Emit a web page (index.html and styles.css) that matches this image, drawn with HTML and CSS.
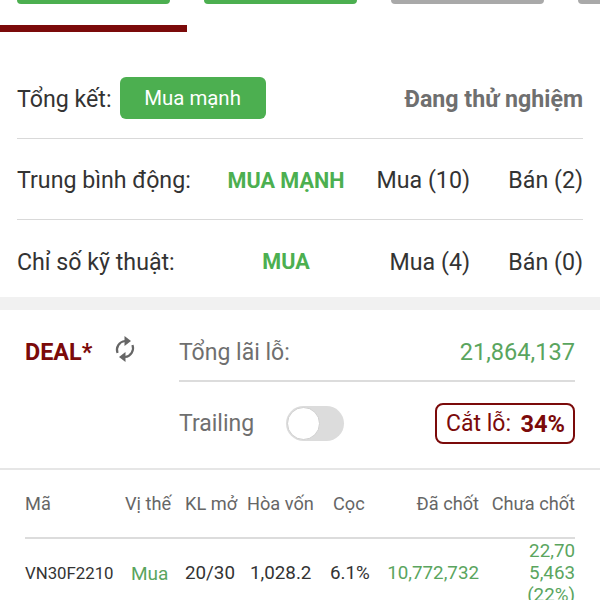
FILE: index.html
```html
<!DOCTYPE html>
<html lang="vi">
<head>
    <meta charset="UTF-8" />
    <meta name="viewport" content="width=device-width, initial-scale=1" />
    <title>Tổng kết</title>
    <link rel="stylesheet" href="styles.css">
</head>
<body>
    <nav class="tabs">
        <span class="tab tab-green"></span>
        <span class="tab tab-green"></span>
        <span class="tab tab-grey"></span>
        <span class="tab tab-grey"></span>
    </nav>
    <div class="tab-line"></div>

    <section class="summary">
        <div class="row row-total">
            <span class="label">Tổng kết:</span>
            <span class="badge">Mua mạnh</span>
            <span class="testing">Đang thử nghiệm</span>
        </div>
        <div class="row row-signal">
            <span class="label signal-name">Trung bình động:</span>
            <span class="signal">MUA MẠNH</span>
            <span class="count count-buy">Mua (10)</span>
            <span class="count count-sell">Bán (2)</span>
        </div>
        <div class="row row-signal row-last">
            <span class="label signal-name">Chỉ số kỹ thuật:</span>
            <span class="signal">MUA</span>
            <span class="count count-buy">Mua (4)</span>
            <span class="count count-sell">Bán (0)</span>
        </div>
    </section>

    <section class="deal">
        <div class="deal-title">
            <span class="deal-name">DEAL*</span>
            <svg class="refresh" viewBox="0 0 22 26" width="22" height="26" aria-hidden="true">
                <path d="M3.5 17A9 9 0 0 1 11 5" />
                <path d="M18.5 9A9 9 0 0 1 11 21" />
                <path class="arrow" d="M10.5 0l6.5 5-6.5 5z" />
                <path class="arrow" d="M11.5 16l-6.5 5 6.5 5z" />
            </svg>
        </div>
        <div class="deal-info">
            <div class="pnl">
                <span>Tổng lãi lỗ:</span>
                <span class="pnl-value">21,864,137</span>
            </div>
            <div class="options">
                <span>Trailing</span>
                <span class="switch"><span class="knob"></span></span>
                <span class="stoploss">Cắt lỗ:<b>34%</b></span>
            </div>
        </div>
    </section>

    <section class="positions">
        <div class="grid grid-head">
            <span>Mã</span>
            <span>Vị thế</span>
            <span>KL mở</span>
            <span>Hòa vốn</span>
            <span>Cọc</span>
            <span class="right">Đã chốt</span>
            <span class="right">Chưa chốt</span>
        </div>
        <div class="grid grid-row">
            <span class="code">VN30F2210</span>
            <span class="green buy">Mua</span>
            <span>20/30</span>
            <span class="breakeven">1,028.2</span>
            <span class="margin">6.1%</span>
            <span class="right green">10,772,732</span>
            <span class="right green open">22,70<br>5,463<br>(22%)</span>
        </div>
    </section>
</body>
</html>
```
FILE: styles.css
```css
html, body {
    height: 100%;
    overflow: hidden;
}
body {
    margin: 0;
    font-family: Roboto, "Liberation Sans", sans-serif;
    background: #fff;
    color: #333;
}
.tabs {
    display: flex;
    gap: 34.4px;
    padding-left: 17px;
    width: 583px;
    overflow: hidden;
}
.tab {
    flex: none;
    width: 152.7px;
    height: 4px;
    border-radius: 0 0 6px 6px;
}
.tab-green {
    background: #4caf50;
}
.tab-grey {
    background: #a9a9a9;
}
.tab-line {
    width: 187px;
    height: 7px;
    margin-top: 21px;
    background: #7b0a0a;
}
.summary {
    padding: 0 17px;
    height: 265px;
    border-bottom: 13px solid #f1f1f1;
}
.row {
    display: flex;
    align-items: center;
    height: 81px;
    padding-top: 2px;
    box-sizing: border-box;
    border-bottom: 1px solid #d9d9d9;
    font-size: 23.2px;
    white-space: nowrap;
}
.row-total {
    height: 107px;
    padding-top: 28px;
}
.row-last {
    border-bottom: 0;
}
.label {
    color: #333;
}
.badge {
    width: 146px;
    height: 42px;
    margin: -3px 0 0 8px;
    border-radius: 6px;
    background: #4caf50;
    color: #fff;
    font-size: 20.4px;
    line-height: 42px;
    text-align: center;
}
.testing {
    margin-left: auto;
    color: #6f6f6f;
    font-weight: 700;
}
.signal-name {
    width: 210px;
}
.signal {
    width: 118px;
    color: #4caf50;
    font-size: 21.6px;
    font-weight: 700;
    text-align: center;
}
.count {
    text-align: right;
}
.count-buy {
    width: 125px;
}
.count-sell {
    margin-left: auto;
}
.deal {
    display: flex;
    height: 158px;
    padding: 0 25px;
    border-bottom: 2px solid #e6e6e6;
}
.deal-title {
    display: flex;
    align-items: flex-start;
    width: 154px;
    padding-top: 28px;
    box-sizing: border-box;
}
.deal-name {
    color: #7b0a0a;
    font-size: 23.4px;
    font-weight: 700;
}
.refresh {
    margin: -2px 0 0 22px;
    fill: none;
    stroke: #666;
    stroke-width: 2.2;
}
.refresh .arrow {
    fill: #666;
    stroke: none;
}
.deal-info {
    flex: 1;
    color: #6f6f6f;
    font-size: 23px;
}
.pnl {
    display: flex;
    justify-content: space-between;
    align-items: center;
    height: 72px;
    padding-top: 14px;
    box-sizing: border-box;
    border-bottom: 2px solid #dcdcdc;
}
.pnl-value {
    color: #5aa55e;
    font-size: 23.6px;
}
.options {
    display: flex;
    align-items: center;
    margin-top: 21px;
}
.switch {
    display: block;
    width: 58px;
    height: 35px;
    margin-left: 32px;
    border-radius: 18px;
    background: #dcdcdc;
}
.knob {
    display: block;
    width: 33px;
    height: 33px;
    margin: 1px;
    border-radius: 50%;
    background: #fff;
    border: 1px solid #d0d0d0;
    box-sizing: border-box;
}
.stoploss {
    display: flex;
    justify-content: space-between;
    align-items: center;
    width: 140px;
    height: 41px;
    margin-left: auto;
    padding: 0 8px 0 9px;
    box-sizing: border-box;
    border: 2px solid #7b0a0a;
    border-radius: 8px;
    color: #7b0a0a;
    font-size: 23px;
}
.stoploss b {
    font-size: 23.6px;
    font-weight: 700;
}
.positions {
    padding: 0 25px;
}
.grid {
    display: grid;
    grid-template-columns: 100px 60px 62px 86px 54px 92px 96px;
    align-items: center;
    white-space: nowrap;
}
.grid-head {
    height: 69px;
    box-sizing: border-box;
    border-bottom: 2px solid #dcdcdc;
    color: #666;
    font-size: 18.2px;
}
.grid-row {
    height: 68px;
    color: #333;
    font-size: 18.8px;
}
.right {
    text-align: right;
}
.green {
    color: #5aa55e;
}
.code {
    font-size: 16.8px;
}
.buy {
    font-size: 19px;
    padding-left: 6px;
}
.breakeven {
    padding-left: 3px;
}
.margin {
    margin-left: -3px;
}
.open {
    line-height: 22px;
}
```
